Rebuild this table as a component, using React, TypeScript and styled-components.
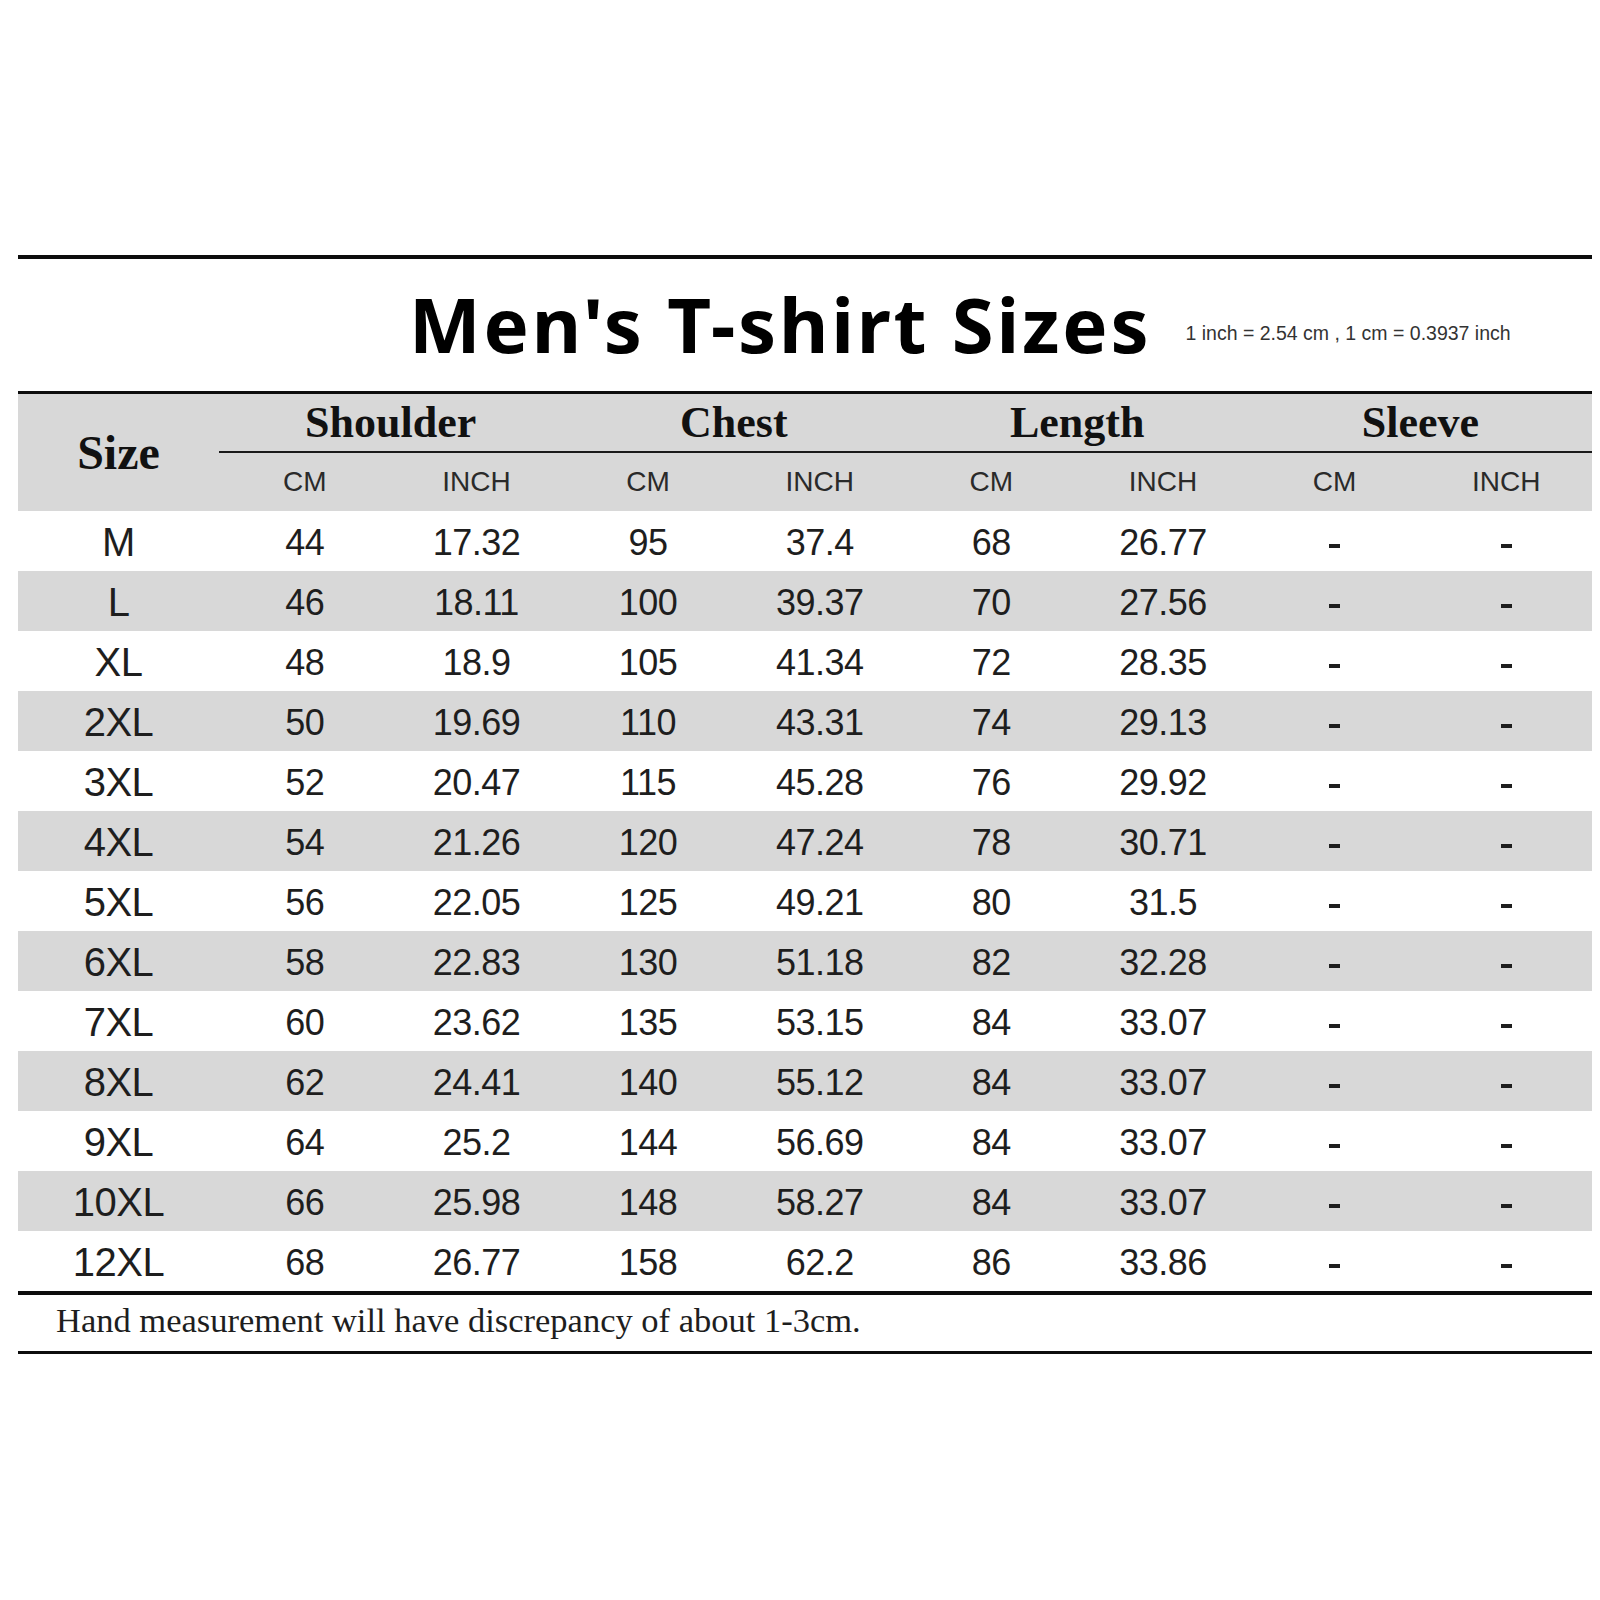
import React from 'react'
import styled, { createGlobalStyle } from 'styled-components'

const GlobalStyle = createGlobalStyle`
  html, body {
    margin: 0;
    padding: 0;
    background: #fff;
  }
  body {
    width: 1600px;
    height: 1600px;
    overflow: hidden;
  }
`

type Row = { size: string; values: string[] }

const rows: Row[] = [
  { size: 'M', values: ['44', '17.32', '95', '37.4', '68', '26.77', '-', '-'] },
  { size: 'L', values: ['46', '18.11', '100', '39.37', '70', '27.56', '-', '-'] },
  { size: 'XL', values: ['48', '18.9', '105', '41.34', '72', '28.35', '-', '-'] },
  { size: '2XL', values: ['50', '19.69', '110', '43.31', '74', '29.13', '-', '-'] },
  { size: '3XL', values: ['52', '20.47', '115', '45.28', '76', '29.92', '-', '-'] },
  { size: '4XL', values: ['54', '21.26', '120', '47.24', '78', '30.71', '-', '-'] },
  { size: '5XL', values: ['56', '22.05', '125', '49.21', '80', '31.5', '-', '-'] },
  { size: '6XL', values: ['58', '22.83', '130', '51.18', '82', '32.28', '-', '-'] },
  { size: '7XL', values: ['60', '23.62', '135', '53.15', '84', '33.07', '-', '-'] },
  { size: '8XL', values: ['62', '24.41', '140', '55.12', '84', '33.07', '-', '-'] },
  { size: '9XL', values: ['64', '25.2', '144', '56.69', '84', '33.07', '-', '-'] },
  { size: '10XL', values: ['66', '25.98', '148', '58.27', '84', '33.07', '-', '-'] },
  { size: '12XL', values: ['68', '26.77', '158', '62.2', '86', '33.86', '-', '-'] },
]

const groups = ['Shoulder', 'Chest', 'Length', 'Sleeve']

function App() {
  return (
    <>
      <GlobalStyle />
      <Page>
        <Sheet>
          <Rule thick={4} />
          <TitleBar>
            <Title>Men's T-shirt Sizes</Title>
            <Note>1 inch = 2.54 cm , 1 cm = 0.3937 inch</Note>
          </TitleBar>
          <Rule thick={3} />
          <Head>
            <SizeHead>Size</SizeHead>
            {groups.map((g) => (
              <GroupHead key={g}>{g}</GroupHead>
            ))}
            {groups.map((g) => (
              <React.Fragment key={g}>
                <UnitHead>CM</UnitHead>
                <UnitHead>INCH</UnitHead>
              </React.Fragment>
            ))}
          </Head>
          {rows.map((r, i) => (
            <DataRow key={r.size} shaded={i % 2 === 1}>
              <SizeCell>{r.size}</SizeCell>
              {r.values.map((v, j) =>
                v === '-' ? (
                  <Cell key={j}>
                    <Dash />
                  </Cell>
                ) : (
                  <Cell key={j}>{v}</Cell>
                )
              )}
            </DataRow>
          ))}
          <Rule thick={4} />
          <Footer>Hand measurement will have discrepancy of about 1-3cm.</Footer>
          <Rule thick={3} />
        </Sheet>
      </Page>
    </>
  )
}

export default App

const Page = styled.div`
  width: 1600px;
  height: 1600px;
  background: #fff;
  padding: 255px 8px 0 18px;
  box-sizing: border-box;
`

const Sheet = styled.div`
  width: 1574px;
  display: flex;
  flex-direction: column;
`

const Rule = styled.div<{ thick: number }>`
  height: ${(p) => p.thick}px;
  background: #0d0d0d;
`

const TitleBar = styled.div`
  height: 132px;
  display: flex;
  align-items: flex-end;
  padding-left: 391px;
  box-sizing: border-box;
`

const Title = styled.h1`
  margin: 0 0 29px;
  font-family: 'Noto Sans', 'Open Sans', sans-serif;
  font-weight: 700;
  font-size: 76px;
  line-height: 76px;
  letter-spacing: 2.8px;
  color: #000;
  white-space: nowrap;
`

const Note = styled.span`
  margin: 0 0 47px 34px;
  font-family: 'Liberation Sans', Arial, sans-serif;
  font-size: 19.5px;
  line-height: 22px;
  color: #333;
  white-space: nowrap;
`

const Head = styled.div`
  display: grid;
  grid-template-columns: 201px repeat(8, 1fr);
  grid-template-rows: 59px 58px;
  background: #d8d8d8;
`

const SizeHead = styled.div`
  grid-row: 1 / span 2;
  display: flex;
  align-items: center;
  justify-content: center;
  font-family: 'Liberation Serif', 'Times New Roman', serif;
  font-weight: 700;
  font-size: 48px;
  color: #111;
`

const GroupHead = styled.div`
  grid-column: span 2;
  display: flex;
  align-items: center;
  justify-content: center;
  border-bottom: 2px solid #1a1a1a;
  font-family: 'Liberation Serif', 'Times New Roman', serif;
  font-weight: 700;
  font-size: 44px;
  color: #111;
`

const UnitHead = styled.div`
  display: flex;
  align-items: center;
  justify-content: center;
  font-family: 'Liberation Sans', Arial, sans-serif;
  font-size: 28px;
  color: #2a2a2a;
`

const DataRow = styled.div<{ shaded: boolean }>`
  display: grid;
  grid-template-columns: 201px repeat(8, 1fr);
  height: 60px;
  background: ${(p) => (p.shaded ? '#d8d8d8' : '#fff')};
`

const Cell = styled.div`
  display: flex;
  align-items: center;
  justify-content: center;
  padding-top: 3px;
  box-sizing: border-box;
  font-family: 'Liberation Sans', Arial, sans-serif;
  font-size: 36px;
  color: #1e1e1e;
  letter-spacing: -0.5px;
`

const SizeCell = styled(Cell)`
  font-size: 40px;
`

const Dash = styled.span`
  display: block;
  width: 11px;
  height: 4px;
  background: #1e1e1e;
  margin-top: 6px;
`

const Footer = styled.div`
  height: 56px;
  display: flex;
  align-items: center;
  padding: 0 0 6px 38px;
  box-sizing: border-box;
  font-family: 'Liberation Serif', 'Times New Roman', serif;
  font-size: 34.5px;
  color: #1e1e1e;
`
